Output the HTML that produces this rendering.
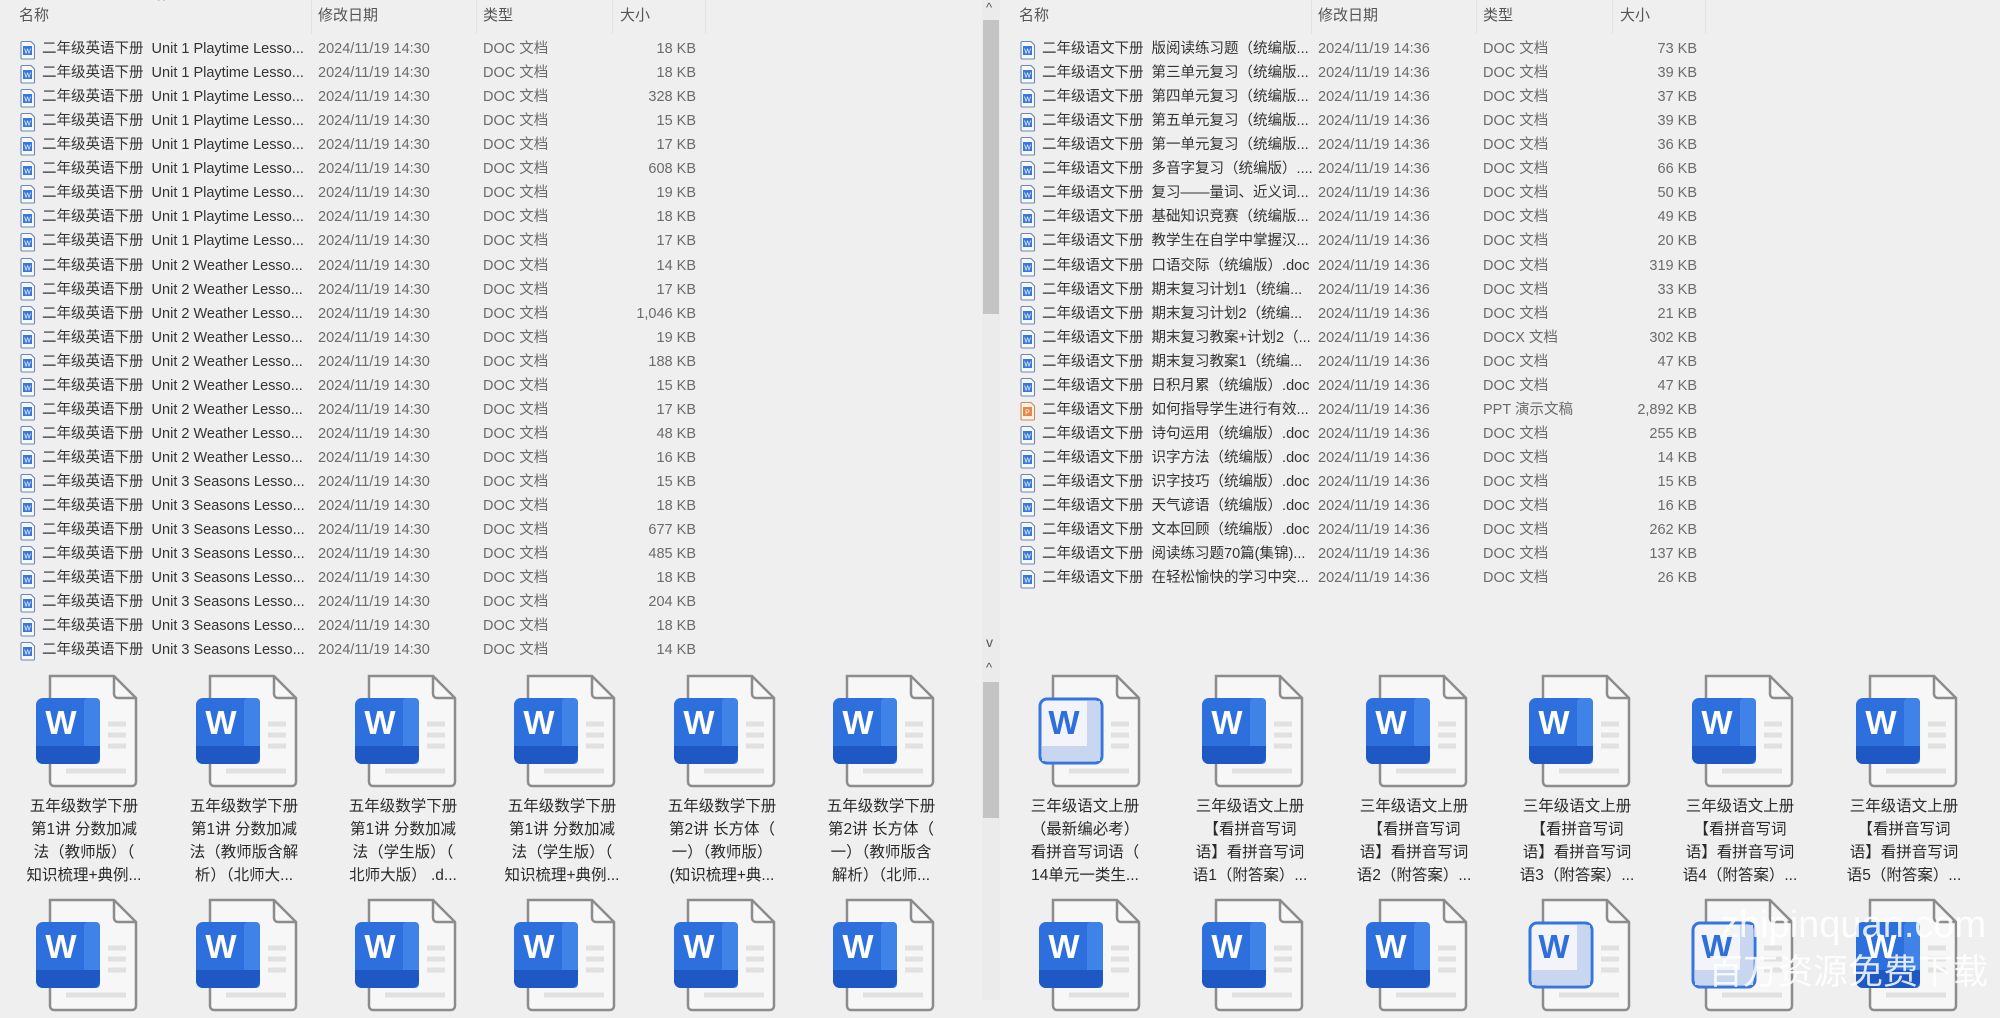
<!DOCTYPE html>
<html><head><meta charset="utf-8">
<style>
*{margin:0;padding:0;box-sizing:border-box}
body{width:2000px;height:1000px;background:#efefef;position:relative;overflow:hidden;font-family:"Liberation Sans","Noto Sans CJK SC",sans-serif;color:#222}
.h{position:absolute;top:6px;font-size:15px;color:#555;line-height:20px}
.sep{position:absolute;top:0;width:1px;height:34px;background:#e2e2e2}
.r{position:absolute;height:22px;line-height:22px;font-size:14.5px;white-space:nowrap}
.r svg{position:absolute;left:0;top:2px}
.r .n{position:absolute;left:22px;color:#333}
.r .d{position:absolute;color:#6b6b6b}
.r .t{position:absolute;color:#6b6b6b}
.r .s{position:absolute;color:#6b6b6b;text-align:right;width:90px}
.ic{position:absolute;width:110px;height:120px}
.lb{position:absolute;width:140px;text-align:center;font-size:15.5px;line-height:23px;color:#2a2a2a;white-space:nowrap}
.wm{position:absolute;color:rgba(255,255,255,0.85);font-family:"Liberation Sans","Noto Sans CJK SC",sans-serif;white-space:nowrap;line-height:1}
</style></head><body>
<svg width="0" height="0" style="position:absolute">
<defs>
<symbol id="si" viewBox="0 0 16 20"><path d="M2 1.5h9l3.5 3.5v13a1 1 0 0 1-1 1H2a1 1 0 0 1-1-1v-15.5a1 1 0 0 1 1-1z" fill="#f8f8f8" stroke="#6d87b5" stroke-width="1.1"/><rect x="3" y="6" width="9" height="9" fill="#3a78d8"/><text x="7.5" y="13.5" font-size="7" fill="#fff" text-anchor="middle" font-family="Liberation Sans">W</text></symbol>
<symbol id="sp" viewBox="0 0 16 20"><path d="M2 1.5h9l3.5 3.5v13a1 1 0 0 1-1 1H2a1 1 0 0 1-1-1v-15.5a1 1 0 0 1 1-1z" fill="#fbf3ec" stroke="#d2874d" stroke-width="1.1"/><rect x="3" y="6" width="9" height="9" fill="#e2884a"/><text x="7.5" y="13.5" font-size="7" fill="#fff" text-anchor="middle" font-family="Liberation Sans">P</text></symbol>
<symbol id="bi" viewBox="0 0 110 120"><path d="M16 2H80L102 24V108a4 4 0 0 1-4 4H20a4 4 0 0 1-4-4Z" fill="#f7f7f7" stroke="#8c8c8c" stroke-width="2.5"/><path d="M80 2V20a4 4 0 0 0 4 4H102" fill="none" stroke="#8c8c8c" stroke-width="2.5"/><g stroke="#e1e1e1" stroke-width="5"><line x1="74" y1="50" x2="92" y2="50"/><line x1="74" y1="61" x2="92" y2="61"/><line x1="74" y1="72" x2="92" y2="72"/><line x1="32" y1="97" x2="92" y2="97"/></g><rect x="2" y="24" width="64" height="66" rx="7" fill="#2c6fdd"/><rect x="50" y="24" width="16" height="66" rx="4" fill="#3f82e8"/><path d="M2 72H66V83a7 7 0 0 1-7 7H9a7 7 0 0 1-7-7Z" fill="#1d58c4"/><text x="27" y="60" font-size="33" font-weight="bold" fill="#fff" text-anchor="middle" font-family="Liberation Sans">W</text></symbol>
<symbol id="li" viewBox="0 0 110 120"><path d="M16 2H80L102 24V108a4 4 0 0 1-4 4H20a4 4 0 0 1-4-4Z" fill="#f7f7f7" stroke="#8c8c8c" stroke-width="2.5"/><path d="M80 2V20a4 4 0 0 0 4 4H102" fill="none" stroke="#8c8c8c" stroke-width="2.5"/><g stroke="#e1e1e1" stroke-width="5"><line x1="74" y1="50" x2="92" y2="50"/><line x1="74" y1="61" x2="92" y2="61"/><line x1="74" y1="72" x2="92" y2="72"/><line x1="32" y1="97" x2="92" y2="97"/></g><rect x="3" y="25" width="62" height="64" rx="7" fill="#f2f4f9" stroke="#3476de" stroke-width="3"/><rect x="50" y="27" width="13" height="60" fill="#c8d6ef"/><rect x="5" y="72" width="58" height="15" fill="#c8d6ef"/><text x="27" y="60" font-size="33" font-weight="bold" fill="#2e6fd9" text-anchor="middle" font-family="Liberation Sans">W</text></symbol>
</defs></svg>

<!-- left header -->
<div style="position:absolute;left:158px;top:-8px;font-size:14px;color:#777">^</div>
<div class="h" style="left:19px">名称</div>
<div class="h" style="left:318px">修改日期</div>
<div class="h" style="left:483px">类型</div>
<div class="h" style="left:620px">大小</div>
<div class="sep" style="left:311px"></div><div class="sep" style="left:476px"></div><div class="sep" style="left:612px"></div><div class="sep" style="left:705px"></div>
<!-- right header -->
<div class="h" style="left:1019px">名称</div>
<div class="h" style="left:1318px">修改日期</div>
<div class="h" style="left:1483px">类型</div>
<div class="h" style="left:1620px">大小</div>
<div class="sep" style="left:1311px"></div><div class="sep" style="left:1476px"></div><div class="sep" style="left:1612px"></div><div class="sep" style="left:1705px"></div>

<!-- scrollbar -->
<div style="position:absolute;left:982px;top:0;width:18px;height:1000px;background:#ebebeb"></div>
<div style="position:absolute;left:986px;top:0;font-size:13px;color:#555">^</div>
<div style="position:absolute;left:983px;top:20px;width:16px;height:294px;background:#c4c4c4"></div>
<div style="position:absolute;left:986px;top:634px;font-size:14px;color:#555">v</div>
<div style="position:absolute;left:986px;top:660px;font-size:13px;color:#555">^</div>
<div style="position:absolute;left:983px;top:682px;width:16px;height:136px;background:#c4c4c4"></div>

<!-- left list -->
<div style="position:absolute;left:20px;top:0">
<div class="r" style="top:38px"><svg width="16" height="20"><use href="#si"/></svg><span class="n">二年级英语下册&nbsp; Unit 1 Playtime Lesso...</span><span class="d" style="left:298px">2024/11/19 14:30</span><span class="t" style="left:463px">DOC 文档</span><span class="s" style="left:586px">18 KB</span></div>
<div class="r" style="top:62px"><svg width="16" height="20"><use href="#si"/></svg><span class="n">二年级英语下册&nbsp; Unit 1 Playtime Lesso...</span><span class="d" style="left:298px">2024/11/19 14:30</span><span class="t" style="left:463px">DOC 文档</span><span class="s" style="left:586px">18 KB</span></div>
<div class="r" style="top:86px"><svg width="16" height="20"><use href="#si"/></svg><span class="n">二年级英语下册&nbsp; Unit 1 Playtime Lesso...</span><span class="d" style="left:298px">2024/11/19 14:30</span><span class="t" style="left:463px">DOC 文档</span><span class="s" style="left:586px">328 KB</span></div>
<div class="r" style="top:110px"><svg width="16" height="20"><use href="#si"/></svg><span class="n">二年级英语下册&nbsp; Unit 1 Playtime Lesso...</span><span class="d" style="left:298px">2024/11/19 14:30</span><span class="t" style="left:463px">DOC 文档</span><span class="s" style="left:586px">15 KB</span></div>
<div class="r" style="top:134px"><svg width="16" height="20"><use href="#si"/></svg><span class="n">二年级英语下册&nbsp; Unit 1 Playtime Lesso...</span><span class="d" style="left:298px">2024/11/19 14:30</span><span class="t" style="left:463px">DOC 文档</span><span class="s" style="left:586px">17 KB</span></div>
<div class="r" style="top:158px"><svg width="16" height="20"><use href="#si"/></svg><span class="n">二年级英语下册&nbsp; Unit 1 Playtime Lesso...</span><span class="d" style="left:298px">2024/11/19 14:30</span><span class="t" style="left:463px">DOC 文档</span><span class="s" style="left:586px">608 KB</span></div>
<div class="r" style="top:182px"><svg width="16" height="20"><use href="#si"/></svg><span class="n">二年级英语下册&nbsp; Unit 1 Playtime Lesso...</span><span class="d" style="left:298px">2024/11/19 14:30</span><span class="t" style="left:463px">DOC 文档</span><span class="s" style="left:586px">19 KB</span></div>
<div class="r" style="top:206px"><svg width="16" height="20"><use href="#si"/></svg><span class="n">二年级英语下册&nbsp; Unit 1 Playtime Lesso...</span><span class="d" style="left:298px">2024/11/19 14:30</span><span class="t" style="left:463px">DOC 文档</span><span class="s" style="left:586px">18 KB</span></div>
<div class="r" style="top:230px"><svg width="16" height="20"><use href="#si"/></svg><span class="n">二年级英语下册&nbsp; Unit 1 Playtime Lesso...</span><span class="d" style="left:298px">2024/11/19 14:30</span><span class="t" style="left:463px">DOC 文档</span><span class="s" style="left:586px">17 KB</span></div>
<div class="r" style="top:255px"><svg width="16" height="20"><use href="#si"/></svg><span class="n">二年级英语下册&nbsp; Unit 2 Weather Lesso...</span><span class="d" style="left:298px">2024/11/19 14:30</span><span class="t" style="left:463px">DOC 文档</span><span class="s" style="left:586px">14 KB</span></div>
<div class="r" style="top:279px"><svg width="16" height="20"><use href="#si"/></svg><span class="n">二年级英语下册&nbsp; Unit 2 Weather Lesso...</span><span class="d" style="left:298px">2024/11/19 14:30</span><span class="t" style="left:463px">DOC 文档</span><span class="s" style="left:586px">17 KB</span></div>
<div class="r" style="top:303px"><svg width="16" height="20"><use href="#si"/></svg><span class="n">二年级英语下册&nbsp; Unit 2 Weather Lesso...</span><span class="d" style="left:298px">2024/11/19 14:30</span><span class="t" style="left:463px">DOC 文档</span><span class="s" style="left:586px">1,046 KB</span></div>
<div class="r" style="top:327px"><svg width="16" height="20"><use href="#si"/></svg><span class="n">二年级英语下册&nbsp; Unit 2 Weather Lesso...</span><span class="d" style="left:298px">2024/11/19 14:30</span><span class="t" style="left:463px">DOC 文档</span><span class="s" style="left:586px">19 KB</span></div>
<div class="r" style="top:351px"><svg width="16" height="20"><use href="#si"/></svg><span class="n">二年级英语下册&nbsp; Unit 2 Weather Lesso...</span><span class="d" style="left:298px">2024/11/19 14:30</span><span class="t" style="left:463px">DOC 文档</span><span class="s" style="left:586px">188 KB</span></div>
<div class="r" style="top:375px"><svg width="16" height="20"><use href="#si"/></svg><span class="n">二年级英语下册&nbsp; Unit 2 Weather Lesso...</span><span class="d" style="left:298px">2024/11/19 14:30</span><span class="t" style="left:463px">DOC 文档</span><span class="s" style="left:586px">15 KB</span></div>
<div class="r" style="top:399px"><svg width="16" height="20"><use href="#si"/></svg><span class="n">二年级英语下册&nbsp; Unit 2 Weather Lesso...</span><span class="d" style="left:298px">2024/11/19 14:30</span><span class="t" style="left:463px">DOC 文档</span><span class="s" style="left:586px">17 KB</span></div>
<div class="r" style="top:423px"><svg width="16" height="20"><use href="#si"/></svg><span class="n">二年级英语下册&nbsp; Unit 2 Weather Lesso...</span><span class="d" style="left:298px">2024/11/19 14:30</span><span class="t" style="left:463px">DOC 文档</span><span class="s" style="left:586px">48 KB</span></div>
<div class="r" style="top:447px"><svg width="16" height="20"><use href="#si"/></svg><span class="n">二年级英语下册&nbsp; Unit 2 Weather Lesso...</span><span class="d" style="left:298px">2024/11/19 14:30</span><span class="t" style="left:463px">DOC 文档</span><span class="s" style="left:586px">16 KB</span></div>
<div class="r" style="top:471px"><svg width="16" height="20"><use href="#si"/></svg><span class="n">二年级英语下册&nbsp; Unit 3 Seasons Lesso...</span><span class="d" style="left:298px">2024/11/19 14:30</span><span class="t" style="left:463px">DOC 文档</span><span class="s" style="left:586px">15 KB</span></div>
<div class="r" style="top:495px"><svg width="16" height="20"><use href="#si"/></svg><span class="n">二年级英语下册&nbsp; Unit 3 Seasons Lesso...</span><span class="d" style="left:298px">2024/11/19 14:30</span><span class="t" style="left:463px">DOC 文档</span><span class="s" style="left:586px">18 KB</span></div>
<div class="r" style="top:519px"><svg width="16" height="20"><use href="#si"/></svg><span class="n">二年级英语下册&nbsp; Unit 3 Seasons Lesso...</span><span class="d" style="left:298px">2024/11/19 14:30</span><span class="t" style="left:463px">DOC 文档</span><span class="s" style="left:586px">677 KB</span></div>
<div class="r" style="top:543px"><svg width="16" height="20"><use href="#si"/></svg><span class="n">二年级英语下册&nbsp; Unit 3 Seasons Lesso...</span><span class="d" style="left:298px">2024/11/19 14:30</span><span class="t" style="left:463px">DOC 文档</span><span class="s" style="left:586px">485 KB</span></div>
<div class="r" style="top:567px"><svg width="16" height="20"><use href="#si"/></svg><span class="n">二年级英语下册&nbsp; Unit 3 Seasons Lesso...</span><span class="d" style="left:298px">2024/11/19 14:30</span><span class="t" style="left:463px">DOC 文档</span><span class="s" style="left:586px">18 KB</span></div>
<div class="r" style="top:591px"><svg width="16" height="20"><use href="#si"/></svg><span class="n">二年级英语下册&nbsp; Unit 3 Seasons Lesso...</span><span class="d" style="left:298px">2024/11/19 14:30</span><span class="t" style="left:463px">DOC 文档</span><span class="s" style="left:586px">204 KB</span></div>
<div class="r" style="top:615px"><svg width="16" height="20"><use href="#si"/></svg><span class="n">二年级英语下册&nbsp; Unit 3 Seasons Lesso...</span><span class="d" style="left:298px">2024/11/19 14:30</span><span class="t" style="left:463px">DOC 文档</span><span class="s" style="left:586px">18 KB</span></div>
<div class="r" style="top:639px"><svg width="16" height="20"><use href="#si"/></svg><span class="n">二年级英语下册&nbsp; Unit 3 Seasons Lesso...</span><span class="d" style="left:298px">2024/11/19 14:30</span><span class="t" style="left:463px">DOC 文档</span><span class="s" style="left:586px">14 KB</span></div>
</div>

<!-- right list -->
<div style="position:absolute;left:1020px;top:0">
<div class="r" style="top:38px"><svg width="16" height="20"><use href="#si"/></svg><span class="n">二年级语文下册&nbsp; 版阅读练习题（统编版...</span><span class="d" style="left:298px">2024/11/19 14:36</span><span class="t" style="left:463px">DOC 文档</span><span class="s" style="left:587px">73 KB</span></div>
<div class="r" style="top:62px"><svg width="16" height="20"><use href="#si"/></svg><span class="n">二年级语文下册&nbsp; 第三单元复习（统编版...</span><span class="d" style="left:298px">2024/11/19 14:36</span><span class="t" style="left:463px">DOC 文档</span><span class="s" style="left:587px">39 KB</span></div>
<div class="r" style="top:86px"><svg width="16" height="20"><use href="#si"/></svg><span class="n">二年级语文下册&nbsp; 第四单元复习（统编版...</span><span class="d" style="left:298px">2024/11/19 14:36</span><span class="t" style="left:463px">DOC 文档</span><span class="s" style="left:587px">37 KB</span></div>
<div class="r" style="top:110px"><svg width="16" height="20"><use href="#si"/></svg><span class="n">二年级语文下册&nbsp; 第五单元复习（统编版...</span><span class="d" style="left:298px">2024/11/19 14:36</span><span class="t" style="left:463px">DOC 文档</span><span class="s" style="left:587px">39 KB</span></div>
<div class="r" style="top:134px"><svg width="16" height="20"><use href="#si"/></svg><span class="n">二年级语文下册&nbsp; 第一单元复习（统编版...</span><span class="d" style="left:298px">2024/11/19 14:36</span><span class="t" style="left:463px">DOC 文档</span><span class="s" style="left:587px">36 KB</span></div>
<div class="r" style="top:158px"><svg width="16" height="20"><use href="#si"/></svg><span class="n">二年级语文下册&nbsp; 多音字复习（统编版）....</span><span class="d" style="left:298px">2024/11/19 14:36</span><span class="t" style="left:463px">DOC 文档</span><span class="s" style="left:587px">66 KB</span></div>
<div class="r" style="top:182px"><svg width="16" height="20"><use href="#si"/></svg><span class="n">二年级语文下册&nbsp; 复习——量词、近义词...</span><span class="d" style="left:298px">2024/11/19 14:36</span><span class="t" style="left:463px">DOC 文档</span><span class="s" style="left:587px">50 KB</span></div>
<div class="r" style="top:206px"><svg width="16" height="20"><use href="#si"/></svg><span class="n">二年级语文下册&nbsp; 基础知识竞赛（统编版...</span><span class="d" style="left:298px">2024/11/19 14:36</span><span class="t" style="left:463px">DOC 文档</span><span class="s" style="left:587px">49 KB</span></div>
<div class="r" style="top:230px"><svg width="16" height="20"><use href="#si"/></svg><span class="n">二年级语文下册&nbsp; 教学生在自学中掌握汉...</span><span class="d" style="left:298px">2024/11/19 14:36</span><span class="t" style="left:463px">DOC 文档</span><span class="s" style="left:587px">20 KB</span></div>
<div class="r" style="top:255px"><svg width="16" height="20"><use href="#si"/></svg><span class="n">二年级语文下册&nbsp; 口语交际（统编版）.doc</span><span class="d" style="left:298px">2024/11/19 14:36</span><span class="t" style="left:463px">DOC 文档</span><span class="s" style="left:587px">319 KB</span></div>
<div class="r" style="top:279px"><svg width="16" height="20"><use href="#si"/></svg><span class="n">二年级语文下册&nbsp; 期末复习计划1（统编...</span><span class="d" style="left:298px">2024/11/19 14:36</span><span class="t" style="left:463px">DOC 文档</span><span class="s" style="left:587px">33 KB</span></div>
<div class="r" style="top:303px"><svg width="16" height="20"><use href="#si"/></svg><span class="n">二年级语文下册&nbsp; 期末复习计划2（统编...</span><span class="d" style="left:298px">2024/11/19 14:36</span><span class="t" style="left:463px">DOC 文档</span><span class="s" style="left:587px">21 KB</span></div>
<div class="r" style="top:327px"><svg width="16" height="20"><use href="#si"/></svg><span class="n">二年级语文下册&nbsp; 期末复习教案+计划2（...</span><span class="d" style="left:298px">2024/11/19 14:36</span><span class="t" style="left:463px">DOCX 文档</span><span class="s" style="left:587px">302 KB</span></div>
<div class="r" style="top:351px"><svg width="16" height="20"><use href="#si"/></svg><span class="n">二年级语文下册&nbsp; 期末复习教案1（统编...</span><span class="d" style="left:298px">2024/11/19 14:36</span><span class="t" style="left:463px">DOC 文档</span><span class="s" style="left:587px">47 KB</span></div>
<div class="r" style="top:375px"><svg width="16" height="20"><use href="#si"/></svg><span class="n">二年级语文下册&nbsp; 日积月累（统编版）.doc</span><span class="d" style="left:298px">2024/11/19 14:36</span><span class="t" style="left:463px">DOC 文档</span><span class="s" style="left:587px">47 KB</span></div>
<div class="r" style="top:399px"><svg width="16" height="20"><use href="#sp"/></svg><span class="n">二年级语文下册&nbsp; 如何指导学生进行有效...</span><span class="d" style="left:298px">2024/11/19 14:36</span><span class="t" style="left:463px">PPT 演示文稿</span><span class="s" style="left:587px">2,892 KB</span></div>
<div class="r" style="top:423px"><svg width="16" height="20"><use href="#si"/></svg><span class="n">二年级语文下册&nbsp; 诗句运用（统编版）.doc</span><span class="d" style="left:298px">2024/11/19 14:36</span><span class="t" style="left:463px">DOC 文档</span><span class="s" style="left:587px">255 KB</span></div>
<div class="r" style="top:447px"><svg width="16" height="20"><use href="#si"/></svg><span class="n">二年级语文下册&nbsp; 识字方法（统编版）.doc</span><span class="d" style="left:298px">2024/11/19 14:36</span><span class="t" style="left:463px">DOC 文档</span><span class="s" style="left:587px">14 KB</span></div>
<div class="r" style="top:471px"><svg width="16" height="20"><use href="#si"/></svg><span class="n">二年级语文下册&nbsp; 识字技巧（统编版）.doc</span><span class="d" style="left:298px">2024/11/19 14:36</span><span class="t" style="left:463px">DOC 文档</span><span class="s" style="left:587px">15 KB</span></div>
<div class="r" style="top:495px"><svg width="16" height="20"><use href="#si"/></svg><span class="n">二年级语文下册&nbsp; 天气谚语（统编版）.doc</span><span class="d" style="left:298px">2024/11/19 14:36</span><span class="t" style="left:463px">DOC 文档</span><span class="s" style="left:587px">16 KB</span></div>
<div class="r" style="top:519px"><svg width="16" height="20"><use href="#si"/></svg><span class="n">二年级语文下册&nbsp; 文本回顾（统编版）.doc</span><span class="d" style="left:298px">2024/11/19 14:36</span><span class="t" style="left:463px">DOC 文档</span><span class="s" style="left:587px">262 KB</span></div>
<div class="r" style="top:543px"><svg width="16" height="20"><use href="#si"/></svg><span class="n">二年级语文下册&nbsp; 阅读练习题70篇(集锦)...</span><span class="d" style="left:298px">2024/11/19 14:36</span><span class="t" style="left:463px">DOC 文档</span><span class="s" style="left:587px">137 KB</span></div>
<div class="r" style="top:567px"><svg width="16" height="20"><use href="#si"/></svg><span class="n">二年级语文下册&nbsp; 在轻松愉快的学习中突...</span><span class="d" style="left:298px">2024/11/19 14:36</span><span class="t" style="left:463px">DOC 文档</span><span class="s" style="left:587px">26 KB</span></div>
</div>

<!-- left grid icons -->
<svg class="ic" style="left:34px;top:674px"><use href="#bi"/></svg>
<svg class="ic" style="left:194px;top:674px"><use href="#bi"/></svg>
<svg class="ic" style="left:353px;top:674px"><use href="#bi"/></svg>
<svg class="ic" style="left:512px;top:674px"><use href="#bi"/></svg>
<svg class="ic" style="left:672px;top:674px"><use href="#bi"/></svg>
<svg class="ic" style="left:831px;top:674px"><use href="#bi"/></svg>
<svg class="ic" style="left:34px;top:898px"><use href="#bi"/></svg>
<svg class="ic" style="left:194px;top:898px"><use href="#bi"/></svg>
<svg class="ic" style="left:353px;top:898px"><use href="#bi"/></svg>
<svg class="ic" style="left:512px;top:898px"><use href="#bi"/></svg>
<svg class="ic" style="left:672px;top:898px"><use href="#bi"/></svg>
<svg class="ic" style="left:831px;top:898px"><use href="#bi"/></svg>

<div class="lb" style="left:14px;top:795px">五年级数学下册<br>第1讲 分数加减<br>法（教师版）（<br>知识梳理+典例...</div>
<div class="lb" style="left:174px;top:795px">五年级数学下册<br>第1讲 分数加减<br>法（教师版含解<br>析）（北师大...</div>
<div class="lb" style="left:333px;top:795px">五年级数学下册<br>第1讲 分数加减<br>法（学生版）（<br>北师大版） .d...</div>
<div class="lb" style="left:492px;top:795px">五年级数学下册<br>第1讲 分数加减<br>法（学生版）（<br>知识梳理+典例...</div>
<div class="lb" style="left:652px;top:795px">五年级数学下册<br>第2讲 长方体（<br>一）（教师版）<br>(知识梳理+典...</div>
<div class="lb" style="left:811px;top:795px">五年级数学下册<br>第2讲 长方体（<br>一）（教师版含<br>解析）（北师...</div>

<!-- right grid icons -->
<svg class="ic" style="left:1037px;top:674px"><use href="#li"/></svg>
<svg class="ic" style="left:1200px;top:674px"><use href="#bi"/></svg>
<svg class="ic" style="left:1364px;top:674px"><use href="#bi"/></svg>
<svg class="ic" style="left:1527px;top:674px"><use href="#bi"/></svg>
<svg class="ic" style="left:1690px;top:674px"><use href="#bi"/></svg>
<svg class="ic" style="left:1854px;top:674px"><use href="#bi"/></svg>
<svg class="ic" style="left:1037px;top:898px"><use href="#bi"/></svg>
<svg class="ic" style="left:1200px;top:898px"><use href="#bi"/></svg>
<svg class="ic" style="left:1364px;top:898px"><use href="#bi"/></svg>
<svg class="ic" style="left:1527px;top:898px"><use href="#li"/></svg>
<svg class="ic" style="left:1690px;top:898px"><use href="#li"/></svg>
<svg class="ic" style="left:1854px;top:898px"><use href="#bi"/></svg>

<div class="lb" style="left:1015px;top:795px">三年级语文上册<br>（最新编必考）<br>看拼音写词语（<br>14单元一类生...</div>
<div class="lb" style="left:1180px;top:795px">三年级语文上册<br>【看拼音写词<br>语】看拼音写词<br>语1（附答案）...</div>
<div class="lb" style="left:1344px;top:795px">三年级语文上册<br>【看拼音写词<br>语】看拼音写词<br>语2（附答案）...</div>
<div class="lb" style="left:1507px;top:795px">三年级语文上册<br>【看拼音写词<br>语】看拼音写词<br>语3（附答案）...</div>
<div class="lb" style="left:1670px;top:795px">三年级语文上册<br>【看拼音写词<br>语】看拼音写词<br>语4（附答案）...</div>
<div class="lb" style="left:1834px;top:795px">三年级语文上册<br>【看拼音写词<br>语】看拼音写词<br>语5（附答案）...</div>

<div class="wm" style="left:1720px;top:906px;font-size:38px">zhipinquan.com</div>
<div class="wm" style="left:1708px;top:955px;font-size:35px">百万资源免费下载</div>
</body></html>
